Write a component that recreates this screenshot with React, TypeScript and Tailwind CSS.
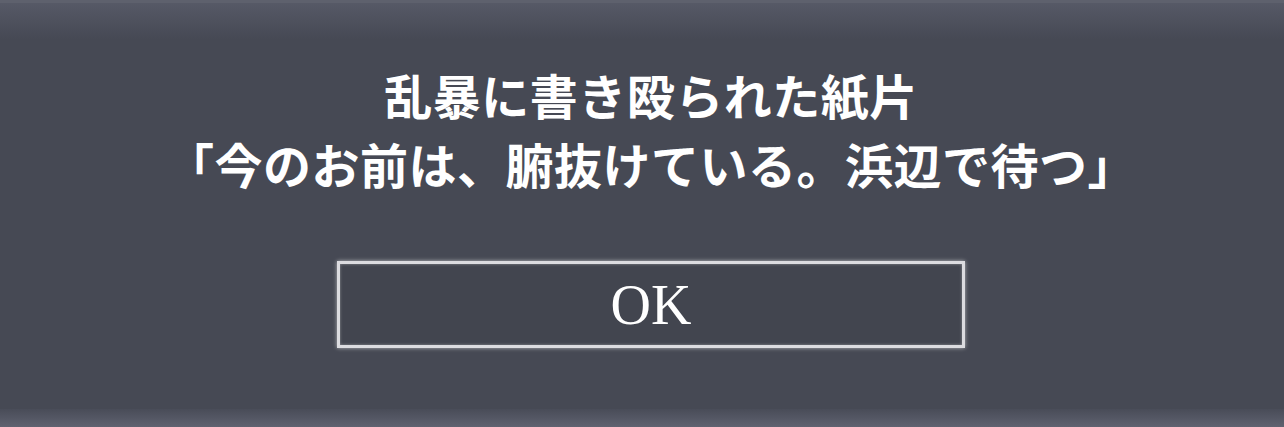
import React from 'react';

export default function App() {
  return (
    <div className="relative h-[427px] w-[1284px] overflow-hidden bg-[#464954]">
      <div className="absolute inset-x-0 top-0 h-[3px] bg-[#5e616d]" />
      <div className="absolute inset-x-0 top-[3px] h-[36px] bg-gradient-to-b from-[#565966] to-[#464954]" />
      <div className="absolute inset-x-0 bottom-0 h-[18px] bg-gradient-to-b from-[#494c58] to-[#5f6270]" />
      <div className="relative flex flex-col items-center pl-[18px] pt-[60px]">
        <div
          className="text-center text-[48px] font-bold leading-[69px] tracking-[0.5px] text-white"
          style={{ fontFamily: '"Noto Sans CJK JP", sans-serif' }}
        >
          <p>乱暴に書き殴られた紙片</p>
          <p>「今のお前は、腑抜けている。浜辺で待つ」</p>
        </div>
        <button
          className="mt-[63px] flex h-[87px] w-[628px] items-center justify-center border-[3px] border-[#dcdce0] bg-[#42454f] text-[56px] text-white shadow-[0_0_4px_rgba(255,255,255,0.6),inset_0_0_3px_rgba(255,255,255,0.4)]"
          style={{ fontFamily: '"Liberation Serif", serif' }}
        >
          OK
        </button>
      </div>
    </div>
  );
}
